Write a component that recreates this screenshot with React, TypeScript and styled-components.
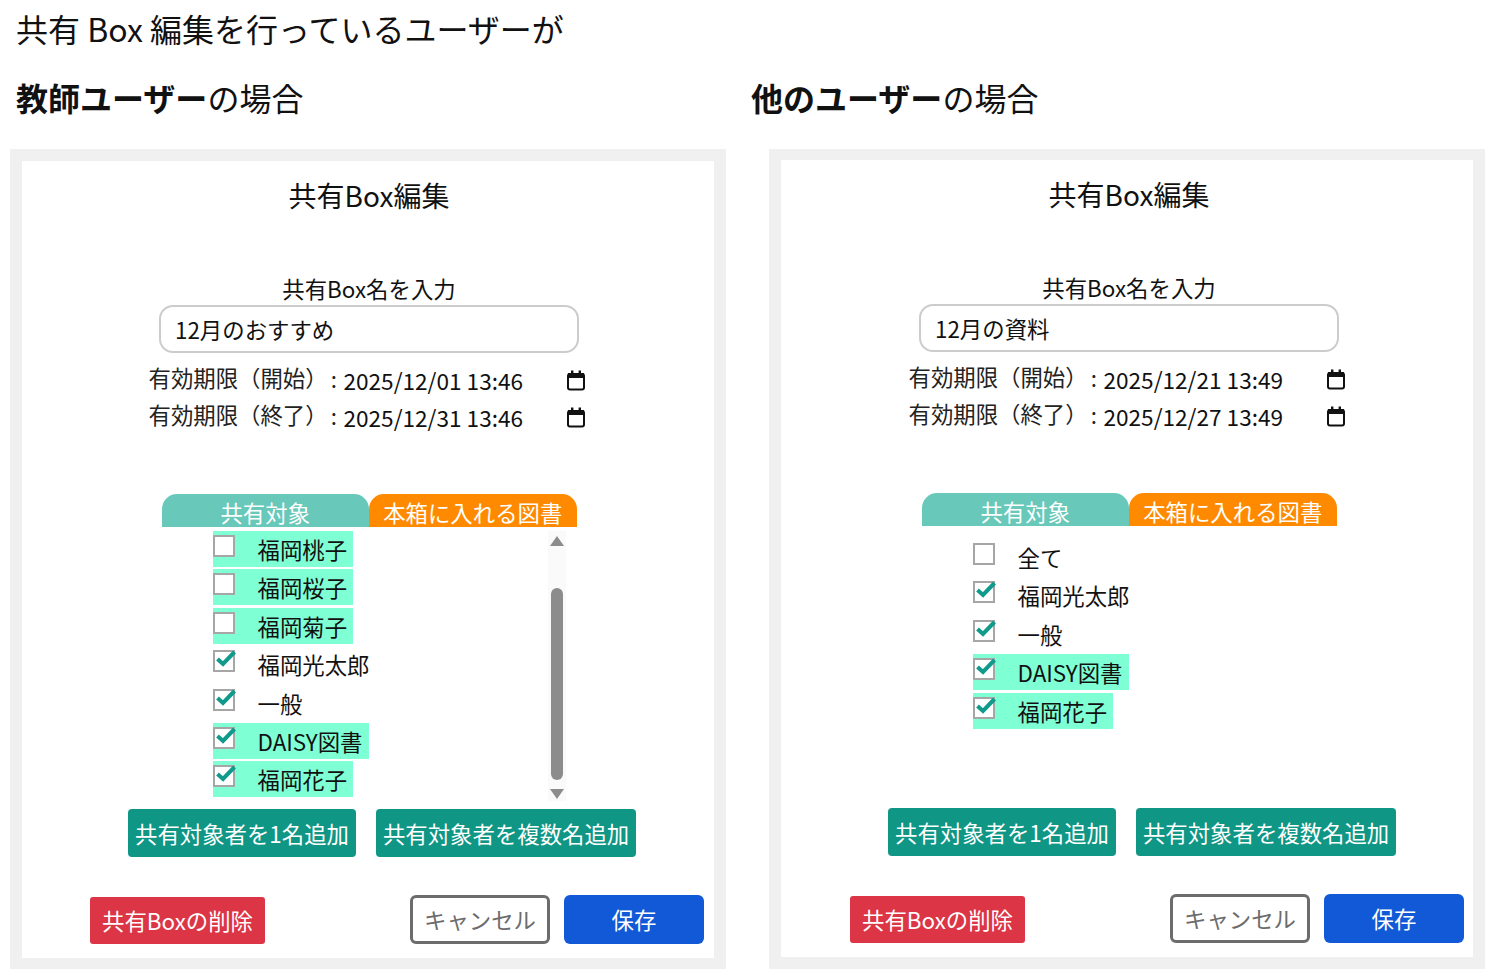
import styled, { createGlobalStyle } from 'styled-components';

interface Member {
  name: string;
  checked: boolean;
  highlight: boolean;
}

interface EditorProps {
  boxName: string;
  start: string;
  end: string;
  members: Member[];
  scrollable: boolean;
  shifted: boolean;
}

const GlobalStyle = createGlobalStyle`
  html, body {
    margin: 0;
    padding: 0;
    background: #fff;
    color: #111;
    font-family: "Noto Sans CJK JP", "Noto Sans", sans-serif;
  }
  * { box-sizing: border-box; }
`;

const Page = styled.div`
  width: 1497px;
  height: 980px;
  overflow: hidden;
`;

const Lead = styled.div`
  padding: 5px 0 0 16px;
  height: 62px;
  font-size: 32px;
  line-height: 46px;
`;

const CaseRow = styled.div`
  display: flex;
  height: 87px;
  padding: 12px 0 0 16px;
`;

const CaseTitle = styled.div`
  width: 735px;
  font-size: 32px;
  line-height: 46px;
  font-weight: 400;
  b { font-weight: 700; }
`;

const PanelRow = styled.div`
  display: flex;
  gap: 43px;
  padding-left: 10px;
`;

const Frame = styled.section<{ $shifted: boolean }>`
  width: 716px;
  height: 820px;
  padding: ${(p) => (p.$shifted ? '11px 12px 12px' : '12px 12px 11px')};
  background: #f0f0f0;
`;

const Sheet = styled.div`
  height: 100%;
  background: #fff;
`;

const Content = styled.div<{ $shifted: boolean }>`
  width: 692px;
  margin-left: ${(p) => (p.$shifted ? '1px' : '0')};
  display: flex;
  flex-direction: column;
  align-items: center;
`;

const SheetTitle = styled.h2`
  margin: 14px 0 0;
  padding-left: 2px;
  width: 100%;
  text-align: center;
  font-size: 28px;
  line-height: 40px;
  font-weight: 400;
`;

const FieldLabel = styled.div`
  margin: 58px 0 0 2px;
  font-size: 22.4px;
  line-height: 30px;
`;

const NameInput = styled.input`
  display: block;
  margin: 2px 0 0 2px;
  width: 420px;
  height: 48px;
  padding: 0 14px;
  border: 2px solid #ccc;
  border-radius: 14px;
  background: #fff;
  color: #111;
  font: 400 22.4px/44px "Noto Sans CJK JP", sans-serif;
  outline: none;
`;

const Dates = styled.div`
  margin: 9px 0 0 1px;
  width: 440px;
`;

const DateRow = styled.div`
  display: flex;
  align-items: center;
  height: 37px;
`;

const DateLabel = styled.span`
  width: 195px;
  flex: none;
  white-space: nowrap;
  font-size: 22.4px;
  line-height: 30px;
  position: relative;
  top: -4px;
  color: #222;
`;

const Colon = styled.span`
  margin-left: 3px;
  position: relative;
  top: 1px;
`;

const DateValue = styled.span`
  width: 222px;
  flex: none;
  font-size: 22.6px;
  line-height: 30px;
`;

const Tabs = styled.div`
  margin: 58px 0 0 2px;
  display: flex;
  width: 415px;
  height: 33px;
`;

const Tab = styled.div<{ $color: string }>`
  width: 50%;
  border-radius: 15px 15px 0 0;
  background: ${(p) => p.$color};
  color: #fff;
  text-align: center;
  font-size: 22.4px;
  line-height: 36px;
  overflow: hidden;
`;

const ListArea = styled.div<{ $scrollable: boolean }>`
  display: flex;
  justify-content: space-between;
  width: 415px;
  margin-left: 2px;
  height: 282px;
  padding: ${(p) => (p.$scrollable ? '4px 11px 0 51px' : '13px 11px 0 51px')};
`;

const Members = styled.ul`
  list-style: none;
  margin: 0;
  padding: 0;
  display: flex;
  flex-direction: column;
  align-items: flex-start;
  gap: 2.4px;
`;

const MemberRow = styled.li<{ $highlight: boolean }>`
  display: flex;
  height: 36px;
  padding-right: 6px;
  background: ${(p) => (p.$highlight ? '#7fffd4' : 'transparent')};
  font-size: 22.4px;
  line-height: 37px;
  white-space: nowrap;
`;

const Box = styled.span`
  position: relative;
  flex: none;
  width: 22px;
  height: 22px;
  margin: 4px 23px 0 0;
  border: 2px solid #a6a6a6;
  background: #fff;
`;

const Tick = styled.svg`
  position: absolute;
  left: 1px;
  top: -1px;
  overflow: visible;
`;

const ScrollBar = styled.div`
  width: 18px;
  height: 270px;
  background: #fafafa;
  display: flex;
  flex-direction: column;
  align-items: center;
  padding-top: 5px;
`;

const ArrowUp = styled.div`
  width: 0;
  height: 0;
  border-left: 7px solid transparent;
  border-right: 7px solid transparent;
  border-bottom: 10px solid #8c8c8c;
`;

const ArrowDown = styled.div`
  width: 0;
  height: 0;
  margin-top: 9px;
  border-left: 7px solid transparent;
  border-right: 7px solid transparent;
  border-top: 10px solid #8c8c8c;
`;

const Thumb = styled.div`
  width: 12px;
  height: 192px;
  margin-top: 42px;
  border-radius: 6px;
  background: #8c8c8c;
`;

const Actions = styled.div`
  display: flex;
  gap: 20px;
  align-self: flex-start;
  margin-left: 106px;
`;

const AddButton = styled.button`
  height: 48px;
  padding: 0 7px;
  border: none;
  border-radius: 4px;
  background: #0f9685;
  color: #fff;
  font: 400 22.4px/48px "Noto Sans CJK JP", sans-serif;
  white-space: nowrap;
`;

const Footer = styled.div`
  margin-top: 38px;
  width: 100%;
  padding: 0 10px 0 68px;
  display: flex;
  align-items: flex-end;
  gap: 14px;
`;

const DeleteButton = styled.button`
  width: 175px;
  height: 47px;
  margin-right: auto;
  padding: 0;
  border: none;
  border-radius: 3px;
  background: #dc3545;
  color: #fff;
  font: 400 22.4px/47px "Noto Sans CJK JP", sans-serif;
`;

const CancelButton = styled.button`
  width: 140px;
  height: 49px;
  padding: 0;
  border: 3px solid #6c6c6c;
  border-radius: 6px;
  background: #fff;
  color: #6c6c6c;
  font: 400 22.4px/43px "Noto Sans CJK JP", sans-serif;
`;

const SaveButton = styled.button`
  width: 140px;
  height: 49px;
  padding: 0;
  border: none;
  border-radius: 6px;
  background: #1159d6;
  color: #fff;
  font: 400 22.4px/49px "Noto Sans CJK JP", sans-serif;
`;

const CalendarIcon = () => (
  <svg width="20" height="21" viewBox="0 0 20 21" fill="none">
    <rect x="2" y="4" width="16" height="15.5" rx="2" stroke="#111" strokeWidth="2" />
    <rect x="2" y="3" width="16" height="5" fill="#111" />
    <rect x="5" y="0.5" width="2.4" height="4" fill="#111" />
    <rect x="12.6" y="0.5" width="2.4" height="4" fill="#111" />
  </svg>
);

const MemberItem = ({ member }: { member: Member }) => (
  <MemberRow $highlight={member.highlight}>
    <Box>
      {member.checked && (
        <Tick width="20" height="15" viewBox="0 0 20 15" fill="none">
          <path d="M1.5 8 L7 13 L18.5 1" stroke="#0f9a8c" strokeWidth="4" />
        </Tick>
      )}
    </Box>
    {member.name}
  </MemberRow>
);

const Editor = ({ boxName, start, end, members, scrollable, shifted }: EditorProps) => (
  <Frame $shifted={shifted}>
    <Sheet>
      <Content $shifted={shifted}>
        <SheetTitle>共有Box編集</SheetTitle>
        <FieldLabel>共有Box名を入力</FieldLabel>
        <NameInput value={boxName} readOnly />
        <Dates>
          <DateRow>
            <DateLabel>
              有効期限（開始）<Colon>:</Colon>
            </DateLabel>
            <DateValue>{start}</DateValue>
            <CalendarIcon />
          </DateRow>
          <DateRow>
            <DateLabel>
              有効期限（終了）<Colon>:</Colon>
            </DateLabel>
            <DateValue>{end}</DateValue>
            <CalendarIcon />
          </DateRow>
        </Dates>
        <Tabs>
          <Tab $color="#68c8b9">共有対象</Tab>
          <Tab $color="#ff8a00">本箱に入れる図書</Tab>
        </Tabs>
        <ListArea $scrollable={scrollable}>
          <Members>
            {members.map((member) => (
              <MemberItem key={member.name} member={member} />
            ))}
          </Members>
          {scrollable && (
            <ScrollBar>
              <ArrowUp />
              <Thumb />
              <ArrowDown />
            </ScrollBar>
          )}
        </ListArea>
        <Actions>
          <AddButton>共有対象者を1名追加</AddButton>
          <AddButton>共有対象者を複数名追加</AddButton>
        </Actions>
        <Footer>
          <DeleteButton>共有Boxの削除</DeleteButton>
          <CancelButton>キャンセル</CancelButton>
          <SaveButton>保存</SaveButton>
        </Footer>
      </Content>
    </Sheet>
  </Frame>
);

const teacherMembers: Member[] = [
  { name: '福岡桃子', checked: false, highlight: true },
  { name: '福岡桜子', checked: false, highlight: true },
  { name: '福岡菊子', checked: false, highlight: true },
  { name: '福岡光太郎', checked: true, highlight: false },
  { name: '一般', checked: true, highlight: false },
  { name: 'DAISY図書', checked: true, highlight: true },
  { name: '福岡花子', checked: true, highlight: true },
];

const otherMembers: Member[] = [
  { name: '全て', checked: false, highlight: false },
  { name: '福岡光太郎', checked: true, highlight: false },
  { name: '一般', checked: true, highlight: false },
  { name: 'DAISY図書', checked: true, highlight: true },
  { name: '福岡花子', checked: true, highlight: true },
];

const App = () => (
  <Page>
    <GlobalStyle />
    <Lead>共有 Box 編集を行っているユーザーが</Lead>
    <CaseRow>
      <CaseTitle>
        <b>教師ユーザー</b>の場合
      </CaseTitle>
      <CaseTitle>
        <b>他のユーザー</b>の場合
      </CaseTitle>
    </CaseRow>
    <PanelRow>
      <Editor
        boxName="12月のおすすめ"
        start="2025/12/01 13:46"
        end="2025/12/31 13:46"
        members={teacherMembers}
        scrollable
        shifted={false}
      />
      <Editor
        boxName="12月の資料"
        start="2025/12/21 13:49"
        end="2025/12/27 13:49"
        members={otherMembers}
        scrollable={false}
        shifted
      />
    </PanelRow>
  </Page>
);

export default App;
